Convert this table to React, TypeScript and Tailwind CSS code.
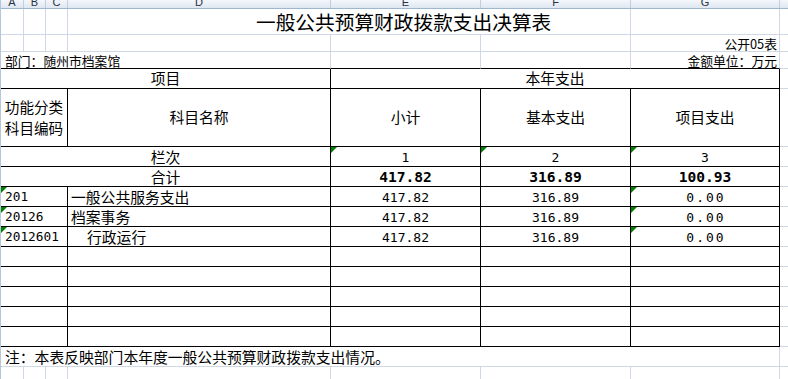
import React from "react";

const cjk = "font-['Noto_Sans_CJK_SC','Noto_Sans',sans-serif]";
const mono = "font-['DejaVu_Sans_Mono','Liberation_Mono',monospace]";
const cols = "grid grid-cols-[23px_22px_22px_263px_150px_150px_149px_8px]";

const gR = "border-r border-r-[#d0d7e5]";
const gB = "border-b border-b-[#d0d7e5]";
const kR = "border-r border-r-black";
const kB = "border-b border-b-black";

function Tri() {
  return (
    <span className="absolute left-0 top-0 h-0 w-0 border-t-[6px] border-r-[6px] border-t-[#008000] border-r-transparent" />
  );
}

function HeadCell({ label }: { label: string }) {
  return (
    <div className="flex justify-center overflow-hidden border-r border-r-[#c3cfdf]">
      <span className="-mt-[5px] block font-['Liberation_Sans',sans-serif] text-[11px] leading-[14px] text-[#27313f]">
        {label}
      </span>
    </div>
  );
}

function NumCell({ v, bold, tri, last }: { v: string; bold?: boolean; tri?: boolean; last?: boolean }) {
  return (
    <div className={`relative flex items-center justify-center pt-[2px] ${kR} ${kB}`}>
      {tri ? <Tri /> : null}
      <span
        className={`${mono} leading-none ${bold ? "text-[14.6px] font-bold" : "text-[13px]"} ${
          last ? "tracking-[2px] pl-[2px]" : ""
        }`}
      >
        {v}
      </span>
    </div>
  );
}

function DataRow({ code, name, indent }: { code: string; name: string; indent?: boolean }) {
  return (
    <div className={`${cols} h-[20px]`}>
      <div className={`col-span-3 relative flex items-center pl-[4px] pt-[2px] ${kR} ${kB}`}>
        <Tri />
        <span className={`${mono} text-[12.8px] leading-none`}>{code}</span>
      </div>
      <div className={`flex items-center pt-[2px] ${indent ? "pl-[19px]" : "pl-[3px]"} ${kR} ${kB}`}>
        <span className={`${cjk} text-[14.8px] leading-none`}>{name}</span>
      </div>
      <NumCell v="417.82" />
      <NumCell v="316.89" />
      <NumCell v="0.00" tri last />
      <div className={gB} />
    </div>
  );
}

function EmptyRow() {
  return (
    <div className={`${cols} h-[20px]`}>
      <div className={`col-span-3 ${kR} ${kB}`} />
      <div className={`${kR} ${kB}`} />
      <div className={`${kR} ${kB}`} />
      <div className={`${kR} ${kB}`} />
      <div className={`${kR} ${kB}`} />
      <div className={gB} />
    </div>
  );
}

export default function App() {
  return (
    <div className={`h-[379px] w-[788px] overflow-hidden border-l border-l-[#b8c6d9] bg-white text-black ${cjk}`}>
      {/* column header */}
      <div className={`${cols} h-[9px] border-b border-b-[#9eb6ce] bg-linear-to-b from-[#f4f7fb] to-[#dfe7f2]`}>
        <HeadCell label="A" />
        <HeadCell label="B" />
        <HeadCell label="C" />
        <HeadCell label="D" />
        <HeadCell label="E" />
        <HeadCell label="F" />
        <HeadCell label="G" />
        <div />
      </div>

      {/* title row */}
      <div className={`${cols} h-[26px]`}>
        <div className={`${gR} ${gB}`} />
        <div className={`${gR} ${gB}`} />
        <div className={`${gR} ${gB}`} />
        <div className={`col-span-3 flex items-center pl-[188px] pt-[1px] ${gR} ${gB}`}>
          <span className="whitespace-nowrap text-[19.7px] leading-none">一般公共预算财政拨款支出决算表</span>
        </div>
        <div className={`${gR} ${gB}`} />
        <div className={gB} />
      </div>

      {/* 公开05表 */}
      <div className={`${cols} h-[17px]`}>
        <div className={`${gR} ${gB}`} />
        <div className={`${gR} ${gB}`} />
        <div className={`${gR} ${gB}`} />
        <div className={`${gR} ${gB}`} />
        <div className={`${gR} ${gB}`} />
        <div className={`${gR} ${gB}`} />
        <div className={`flex items-center justify-end pr-[2px] ${gR} ${gB}`}>
          <span className="whitespace-nowrap text-[12.8px] leading-[13px]">公开05表</span>
        </div>
        <div className={gB} />
      </div>

      {/* 部门 */}
      <div className={`${cols} h-[17px]`}>
        <div className={`col-span-4 flex items-center pl-[4px] ${gR} ${kB}`}>
          <span className="whitespace-nowrap text-[12.8px] leading-[13px]">部门：随州市档案馆</span>
        </div>
        <div className={`${gR} ${kB}`} />
        <div className={`${gR} ${kB}`} />
        <div className={`flex items-center justify-end pr-[2px] ${gR} ${kB}`}>
          <span className="whitespace-nowrap text-[12.8px] leading-[13px]">金额单位：万元</span>
        </div>
        <div className={gB} />
      </div>

      {/* 项目 / 本年支出 */}
      <div className={`${cols} h-[20px]`}>
        <div className={`col-span-4 flex items-center justify-center ${kR} ${kB}`}>
          <span className="text-[14.8px] leading-none">项目</span>
        </div>
        <div className={`col-span-3 flex items-center justify-center ${kR} ${kB}`}>
          <span className="text-[14.8px] leading-none">本年支出</span>
        </div>
        <div className={gB} />
      </div>

      {/* header row */}
      <div className={`${cols} h-[58px]`}>
        <div className={`col-span-3 flex items-center justify-center ${kR} ${kB}`}>
          <span className="text-center text-[14.6px] leading-[20.5px]">
            功能分类
            <br />
            科目编码
          </span>
        </div>
        <div className={`flex items-center justify-center ${kR} ${kB}`}>
          <span className="text-[14.8px] leading-none">科目名称</span>
        </div>
        <div className={`flex items-center justify-center ${kR} ${kB}`}>
          <span className="text-[14.8px] leading-none">小计</span>
        </div>
        <div className={`flex items-center justify-center ${kR} ${kB}`}>
          <span className="text-[14.8px] leading-none">基本支出</span>
        </div>
        <div className={`flex items-center justify-center ${kR} ${kB}`}>
          <span className="text-[14.8px] leading-none">项目支出</span>
        </div>
        <div className={gB} />
      </div>

      {/* 栏次 */}
      <div className={`${cols} h-[20px]`}>
        <div className={`col-span-4 flex items-center justify-center pt-[1px] ${kR} ${kB}`}>
          <span className="text-[14.8px] leading-none">栏次</span>
        </div>
        <NumCell v="1" tri />
        <NumCell v="2" tri />
        <NumCell v="3" tri />
        <div className={gB} />
      </div>

      {/* 合计 */}
      <div className={`${cols} h-[20px]`}>
        <div className={`col-span-4 flex items-center justify-center pt-[1px] ${kR} ${kB}`}>
          <span className="text-[14.8px] leading-none">合计</span>
        </div>
        <NumCell v="417.82" bold />
        <NumCell v="316.89" bold />
        <NumCell v="100.93" bold />
        <div className={gB} />
      </div>

      <DataRow code="201" name="一般公共服务支出" />
      <DataRow code="20126" name="档案事务" />
      <DataRow code="2012601" name="行政运行" indent />

      <EmptyRow />
      <EmptyRow />
      <EmptyRow />
      <EmptyRow />
      <EmptyRow />

      {/* note */}
      <div className={`${cols} h-[20px]`}>
        <div className={`col-span-7 flex items-center pl-[4px] pt-[1px] ${gR} ${gB}`}>
          <span className="whitespace-nowrap text-[14.8px] leading-none">
            注：本表反映部门本年度一般公共预算财政拨款支出情况。
          </span>
        </div>
        <div className={gB} />
      </div>

      {/* last row */}
      <div className={`${cols} h-[13px]`}>
        <div className={gR} />
        <div className={gR} />
        <div className={gR} />
        <div className={gR} />
        <div className={gR} />
        <div className={gR} />
        <div className={gR} />
        <div />
      </div>
    </div>
  );
}
